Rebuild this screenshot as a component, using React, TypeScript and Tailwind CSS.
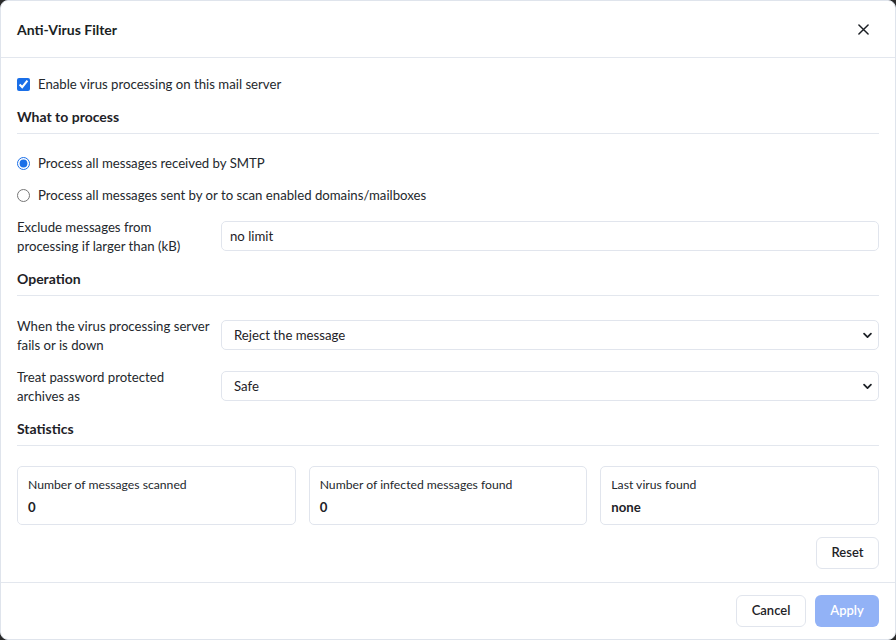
import React from "react";

const font = { fontFamily: "Lato, 'Noto Sans', sans-serif" };

function Heading({ children, mt }: { children: React.ReactNode; mt: string }) {
  return (
    <div className={`${mt} pb-[6px] border-b border-[#e3e7ee] text-[14px] leading-[20px] font-bold text-[#1e2227]`}>
      {children}
    </div>
  );
}

function Chevron() {
  return (
    <svg className="pointer-events-none absolute right-[5px] top-1/2 -translate-y-1/2" width="11" height="11" viewBox="0 0 16 16">
      <path d="M3 6l5 5 5-5" fill="none" stroke="#1e2227" strokeWidth="2.6" strokeLinecap="round" strokeLinejoin="round" />
    </svg>
  );
}

function SelectRow({ label, value, mt }: { label: React.ReactNode; value: string; mt: string }) {
  return (
    <div className={`${mt} grid grid-cols-[196px_1fr] gap-[8px] items-center`}>
      <div className="h-[38px] flex flex-col justify-center text-[13.2px] leading-[19px] text-[#24282d]">
        <div className="pt-[1px]">{label}</div>
      </div>
      <div className="relative h-[30px] rounded-[5px] border border-[#e1e5ed] bg-white flex items-center pl-[12px] pt-[2px] text-[13.2px] text-[#1e2227]">
        {value}
        <Chevron />
      </div>
    </div>
  );
}

function StatCard({ label, value }: { label: string; value: string }) {
  return (
    <div className="h-[59px] rounded-[5px] border border-[#e1e5ed] px-[10px] pt-[9px]">
      <div className="text-[12.2px] leading-[18px] text-[#24282d]">{label}</div>
      <div className="mt-[3px] text-[13.2px] leading-[20px] font-bold text-[#1e2227]">{value}</div>
    </div>
  );
}

export default function App() {
  return (
    <div className="min-h-screen bg-[#2a2a2a]" style={font}>
      <div className="w-[896px] h-[640px] bg-white rounded-[8px] border border-[#dfe4ec] flex flex-col overflow-hidden">
        <div className="h-[57px] shrink-0 border-b border-[#e3e7ee] flex items-center justify-between pl-[16px] pr-[26px]">
          <div className="text-[14px] font-bold text-[#1b1f24] pt-[1px]">Anti-Virus Filter</div>
          <svg width="11" height="11" viewBox="0 0 12 12">
            <path d="M1 1l10 10M11 1L1 11" stroke="#1b1f24" strokeWidth="1.6" strokeLinecap="round" />
          </svg>
        </div>

        <div className="flex-1 px-[16px] pt-[16px] flex flex-col">
          <label className="h-[20px] flex items-center gap-[8px] text-[13.2px] text-[#24282d]">
            <input type="checkbox" defaultChecked className="m-0 w-[13px] h-[13px] accent-[#1a6fe8]" />
            <span className="pt-[2px]">Enable virus processing on this mail server</span>
          </label>

          <Heading mt="mt-[13px]">What to process</Heading>

          <label className="mt-[19px] h-[20px] flex items-center gap-[8px] text-[13.2px] text-[#24282d]">
            <input type="radio" name="p" defaultChecked className="m-0 w-[13px] h-[13px] accent-[#1a6fe8]" />
            <span className="pt-[2px]">Process all messages received by SMTP</span>
          </label>
          <label className="mt-[12px] h-[20px] flex items-center gap-[8px] text-[13.2px] text-[#24282d]">
            <input type="radio" name="p" className="m-0 w-[13px] h-[13px] accent-[#1a6fe8]" />
            <span className="pt-[2px]">Process all messages sent by or to scan enabled domains/mailboxes</span>
          </label>

          <div className="mt-[12px] grid grid-cols-[196px_1fr] gap-[8px] items-center">
            <div className="h-[38px] flex flex-col justify-center text-[13.2px] leading-[19px] text-[#24282d]">
              <div className="pt-[1px]">
                Exclude messages from
                <br />
                processing if larger than (kB)
              </div>
            </div>
            <div className="h-[30px] rounded-[5px] border border-[#e1e5ed] flex items-center pl-[8px] pt-[2px] text-[13.2px] text-[#1e2227]">
              no limit
            </div>
          </div>

          <Heading mt="mt-[14px]">Operation</Heading>

          <SelectRow
            mt="mt-[20px]"
            label={
              <>
                When the virus processing server
                <br />
                fails or is down
              </>
            }
            value="Reject the message"
          />
          <SelectRow
            mt="mt-[13px]"
            label={
              <>
                Treat password protected
                <br />
                archives as
              </>
            }
            value="Safe"
          />

          <Heading mt="mt-[14px]">Statistics</Heading>

          <div className="mt-[20px] grid grid-cols-3 gap-[13px]">
            <StatCard label="Number of messages scanned" value="0" />
            <StatCard label="Number of infected messages found" value="0" />
            <StatCard label="Last virus found" value="none" />
          </div>

          <div className="mt-[12px] flex justify-end">
            <button className="h-[32px] w-[63px] rounded-[6px] border border-[#e1e5ed] bg-white text-[13px] font-semibold text-[#1e2227]">
              Reset
            </button>
          </div>
        </div>

        <div className="shrink-0 border-t border-[#e3e7ee] pt-[12px] pb-[12px] px-[16px] flex justify-end gap-[9px]">
          <button className="h-[32px] w-[70px] rounded-[6px] border border-[#e1e5ed] bg-white text-[13px] font-semibold text-[#1e2227]">
            Cancel
          </button>
          <button className="h-[32px] w-[64px] rounded-[6px] bg-[#92b2f6] text-[13px] font-semibold text-white">
            Apply
          </button>
        </div>
      </div>
    </div>
  );
}
